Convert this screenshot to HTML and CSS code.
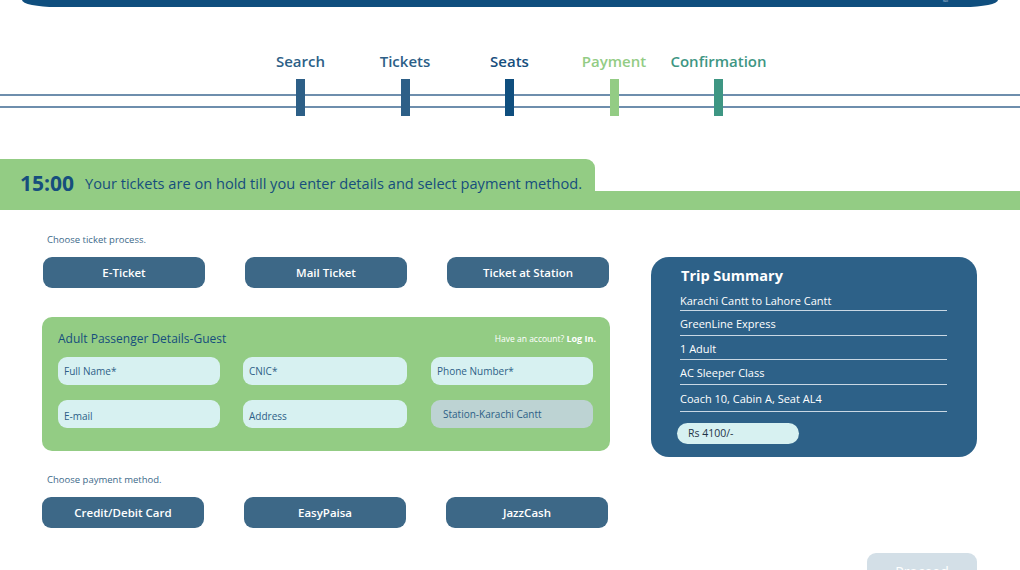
FILE: index.html
```html
<!DOCTYPE html>
<html>
<head>
<meta charset="utf-8">
<link rel="stylesheet" href="styles.css">
</head>
<body>
<div class="topbar"><span class="topbar-text">Rail</span></div>

<div class="stepper">
  <div class="steps">
    <div class="step s-search"><span class="step-label">Search</span><span class="step-bar"></span></div>
    <div class="step s-tickets"><span class="step-label">Tickets</span><span class="step-bar"></span></div>
    <div class="step s-seats"><span class="step-label">Seats</span><span class="step-bar"></span></div>
    <div class="step s-payment"><span class="step-label">Payment</span><span class="step-bar"></span></div>
    <div class="step s-confirm"><span class="step-label">Confirmation</span><span class="step-bar"></span></div>
  </div>
</div>

<div class="hold">
  <div class="hold-tab"><span class="timer">15:00</span><span class="hold-msg">Your tickets are on hold till you enter details and select payment method.</span></div>
  <div class="hold-strip"></div>
</div>

<div class="main">
  <div class="left">
    <p class="hint">Choose ticket process.</p>
    <div class="btn-row">
      <button class="btn btn-e">E-Ticket</button>
      <button class="btn">Mail Ticket</button>
      <button class="btn">Ticket at Station</button>
    </div>

    <div class="passenger">
      <div class="pass-head">
        <span class="pass-title">Adult Passenger Details-Guest</span>
        <span class="account">Have an account? <b>Log In.</b></span>
      </div>
      <div class="fields">
        <div class="field">Full Name*</div>
        <div class="field">CNIC*</div>
        <div class="field">Phone Number*</div>
        <div class="field field-low">E-mail</div>
        <div class="field field-low">Address</div>
        <div class="field field-disabled">Station-Karachi Cantt</div>
      </div>
    </div>

    <p class="hint hint-pay">Choose payment method.</p>
    <div class="btn-row btn-row-pay">
      <button class="btn">Credit/Debit Card</button>
      <button class="btn">EasyPaisa</button>
      <button class="btn">JazzCash</button>
    </div>
  </div>

  <div class="right">
    <div class="summary">
      <h2 class="sum-title">Trip Summary</h2>
      <ul class="sum-list">
        <li>Karachi Cantt to Lahore Cantt</li>
        <li>GreenLine Express</li>
        <li>1 Adult</li>
        <li>AC Sleeper Class</li>
        <li class="last">Coach 10, Cabin A, Seat AL4</li>
      </ul>
      <div class="price">Rs 4100/-</div>
    </div>
    <button class="proceed">Proceed</button>
  </div>
</div>
</body>
</html>
```

FILE: styles.css
```css
* { box-sizing: border-box; }
html, body { margin: 0; padding: 0; }
body {
  width: 1020px;
  height: 570px;
  overflow: hidden;
  background: #ffffff;
  font-family: "Open Sans", "Noto Sans", sans-serif;
}

.topbar {
  margin: 0 22px;
  height: 7px;
  background: #0f4e7e;
  border-radius: 0 0 34px 34px / 0 0 7px 7px;
  display: flex;
  justify-content: flex-end;
  padding-right: 50px;
}
.topbar-text { font-size: 3px; color: #cfd9e3; line-height: 3px; }

.stepper {
  margin-top: 45px;
  height: 64px;
  background:
    linear-gradient(#6e8ead, #6e8ead) 0 42px / 100% 2px no-repeat,
    linear-gradient(#6e8ead, #6e8ead) 0 54px / 100% 2px no-repeat;
  display: flex;
  justify-content: center;
  padding-right: 1px;
}
.steps { display: flex; }
.step {
  width: 104.5px;
  display: flex;
  flex-direction: column;
  align-items: center;
}
.step-label {
  font-size: 15px;
  font-weight: 600;
  line-height: 18px;
  height: 27px;
}
.step-bar { width: 9px; height: 37px; }
.s-search .step-label, .s-tickets .step-label { color: #2d5f87; }
.s-search .step-bar, .s-tickets .step-bar { background: #2d5f87; }
.s-seats .step-label { color: #164e7d; }
.s-seats .step-bar { background: #0f4e7e; }
.s-payment .step-label { color: #93cc84; }
.s-payment .step-bar { background: #93cc84; }
.s-confirm .step-label { color: #3e9683; }
.s-confirm .step-bar { background: #3e9683; }

.hold { margin-top: 43px; }
.hold-tab {
  width: 595px;
  height: 32px;
  background: #93cc84;
  border-radius: 0 9px 0 0;
  display: flex;
  align-items: flex-end;
  padding-left: 20px;
  gap: 11px;
}
.timer {
  font-size: 21px;
  font-weight: 700;
  color: #164e7d;
  line-height: 24px;
  margin-bottom: -4px;
}
.hold-msg {
  font-size: 14.6px;
  color: #164e7d;
  line-height: 20px;
  margin-bottom: -2px;
}
.hold-strip { height: 19px; background: #93cc84; }

.main {
  display: flex;
  padding-left: 42px;
}
.left { width: 568px; }
.hint {
  margin: 23px 0 0 5px;
  font-size: 9.5px;
  color: #3d6a8a;
  line-height: 14px;
}
.btn-row {
  display: flex;
  gap: 40px;
  margin-top: 10px;
  padding-left: 1px;
}
.btn {
  width: 162px;
  height: 31px;
  border: none;
  border-radius: 9px;
  background: #3d6887;
  color: #ffffff;
  font-family: inherit;
  font-size: 11.5px;
  font-weight: 600;
  padding: 0;
}

.passenger {
  margin-top: 29px;
  height: 134px;
  background: #93cc84;
  border-radius: 10px;
  padding: 12px 14px 0 16px;
}
.pass-head {
  display: flex;
  justify-content: space-between;
  align-items: center;
  height: 18px;
}
.pass-title { font-size: 12px; font-weight: 500; color: #164e7d; }
.account { font-size: 8.5px; color: #ffffff; }
.account b { font-weight: 700; font-size: 9px; }
.fields {
  margin-top: 10px;
  display: grid;
  grid-template-columns: 162px 164px 163px;
  column-gap: 23px;
  row-gap: 15px;
}
.field {
  height: 28px;
  border-radius: 9px;
  background: #d7f1f1;
  color: #2d5f87;
  font-size: 10px;
  padding: 0 6px;
  display: flex;
  align-items: center;
}
.field:nth-child(3n) { margin-left: 1px; }
.field-low { padding-top: 3px; }
.field-disabled { background: #bdd3d3; padding-left: 12px; }

.hint-pay { margin-top: 22px; }
.btn-row-pay { margin-top: 10px; padding-left: 0; }

.right {
  margin-left: 41px;
  padding-top: 47px;
  display: flex;
  flex-direction: column;
  align-items: flex-end;
  width: 326px;
}
.summary {
  width: 326px;
  height: 200px;
  background: #2d6188;
  border-radius: 18px;
  padding: 8px 30px 0 26px;
  color: #ffffff;
}
.sum-title {
  margin: 0 0 0 4px;
  font-size: 14.5px;
  font-weight: 700;
  line-height: 22px;
}
.sum-list {
  list-style: none;
  margin: 0 0 0 3px;
  padding: 0;
}
.sum-list li {
  font-size: 11px;
  line-height: 24px;
  height: 24.5px;
  border-bottom: 1.5px solid #c9d8e4;
  padding-top: 1px;
}
.sum-list li:first-child { height: 24px; padding-top: 2px; }
.sum-list li.last { height: 27px; padding-top: 2px; }
.price {
  margin-top: 11px;
  width: 122px;
  height: 21px;
  border-radius: 11px;
  background: #d7f1f1;
  color: #1f3347;
  font-size: 10.5px;
  line-height: 21px;
  padding-left: 11px;
}
.proceed {
  margin-top: 96px;
  width: 110px;
  height: 32px;
  border: none;
  border-radius: 9px;
  background: #d3dfe7;
  color: #ffffff;
  font-family: inherit;
  font-size: 14px;
  padding: 4px 0 0;
}
```
